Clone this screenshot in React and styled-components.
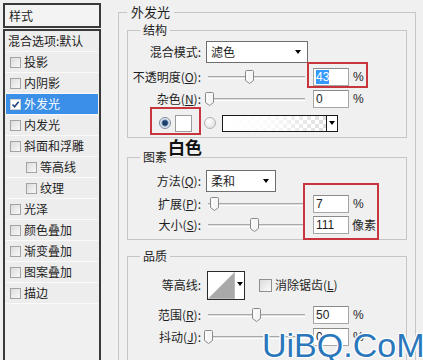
import React from "react";
import styled, { createGlobalStyle } from "styled-components";

const Global = createGlobalStyle`
  html, body { margin: 0; padding: 0; background: #f0f0f0; }
  body {
    font-family: "Noto Sans CJK SC", "Noto Sans", sans-serif;
    font-size: 12px;
    color: #1e1e1e;
  }
  * { box-sizing: border-box; }
`;

const Page = styled.div`
  position: relative;
  width: 423px;
  height: 360px;
  overflow: hidden;
  display: flex;
  align-items: flex-start;
  background: #f0f0f0;
`;

/* ---------- left style list ---------- */
const StylePanel = styled.div`
  width: 98px;
  height: 360px;
  margin: 3px 0 0 3px;
  display: flex;
  flex-direction: column;
`;

const PanelHeader = styled.div`
  height: 25px;
  border: 2px solid #3a3a3a;
  background: #f3f3f3;
  padding-left: 4px;
  display: flex;
  align-items: center;
  line-height: 1;
`;

const ListBox = styled.div`
  flex: 1;
  margin-top: 1px;
  border: 2px solid #3a3a3a;
  border-bottom: none;
  padding: 0 1px;
  background: #f0f0f0;
`;

const ListItem = styled.div`
  height: 21px;
  display: flex;
  align-items: center;
  gap: 3px;
  padding-left: ${(p) => p.$pl}px;
  background: ${(p) => (p.$active ? "#3b8fe6" : "#ededed")};
  color: ${(p) => (p.$active ? "#ffffff" : "#1e1e1e")};
  border-bottom: 1px solid #fafafa;
  line-height: 1;
  white-space: nowrap;
`;

const ListCheck = styled.span`
  width: 11px;
  height: 11px;
  flex-shrink: 0;
  border: 1px solid #a3a3a3;
  background: linear-gradient(135deg, #dcdcdc, #f8f8f8);
  display: flex;
  align-items: center;
  justify-content: center;
  ${(p) => p.$checked && "background: #ffffff; border-color: #d0d0d0;"}
`;

/* ---------- right options ---------- */
const Main = styled.div`
  margin-left: 17px;
  height: 360px;
`;

const Group = styled.fieldset`
  margin: ${(p) => p.$mt || 0}px 0 0 0;
  padding: ${(p) => p.$pad || "0"};
  width: ${(p) => (p.$w ? `${p.$w}px` : "auto")};
  height: ${(p) => (p.$h ? `${p.$h}px` : "auto")};
  border: 1px solid #c6c6c6;
  min-width: 0;
`;

const Legend = styled.legend`
  margin-left: ${(p) => p.$ml || 0}px;
  padding: 0 ${(p) => p.$px || 3}px;
  font-size: ${(p) => p.$fs || 12}px;
  line-height: ${(p) => p.$lh || 14}px;
`;

const Row = styled.div`
  display: flex;
  align-items: center;
  height: ${(p) => p.$h}px;
  margin-top: ${(p) => p.$mt || 0}px;
  padding-left: ${(p) => p.$pl || 0}px;
`;

const Label = styled.span`
  width: 73px;
  margin-right: 5px;
  flex-shrink: 0;
  text-align: right;
  white-space: nowrap;
  line-height: 1;
`;

const Dropdown = styled.div`
  width: ${(p) => p.$w}px;
  height: 22px;
  border: 1px solid #6e6e6e;
  background: #ffffff;
  display: flex;
  align-items: center;
  padding-left: 4px;
  line-height: 1;
`;

const Arrow = styled.span`
  margin-left: auto;
  margin-right: ${(p) => p.$mr ?? 5}px;
  width: 0;
  height: 0;
  border-left: 3.5px solid transparent;
  border-right: 3.5px solid transparent;
  border-top: 4px solid #000;
`;

const SliderWrap = styled.div`
  position: relative;
  width: 101px;
  height: 14px;
  flex-shrink: 0;
`;

const Track = styled.div`
  position: absolute;
  left: 2px;
  right: 2px;
  top: 6px;
  height: 3px;
  border-top: 1px solid #a9a9a9;
  border-bottom: 1px solid #ffffff;
  background: #dcdcdc;
`;

const Thumb = styled.svg`
  position: absolute;
  top: 0;
  left: ${(p) => 2 + p.$v * 97 - 4.5}px;
`;

const NumBox = styled.div`
  width: 36px;
  height: 18px;
  margin-left: 6px;
  flex-shrink: 0;
  border: 1px solid #a6a6a6;
  border-top-color: #8b8b8b;
  background: #ffffff;
  padding-left: 2px;
  display: flex;
  align-items: center;
  font-family: "Liberation Sans", Arial, sans-serif;
  font-size: 12px;
  line-height: 1;
`;

const Selected = styled.span`
  background: #3399ff;
  color: #ffffff;
  padding: 1px 0;
`;

const Unit = styled.span`
  margin-left: ${(p) => p.$ml ?? 4}px;
  font-family: ${(p) =>
    p.$cjk
      ? '"Noto Sans CJK SC", sans-serif'
      : '"Liberation Sans", Arial, sans-serif'};
  font-size: 12px;
  line-height: 1;
`;

const Radio = styled.span`
  width: 12px;
  height: 12px;
  border-radius: 50%;
  flex-shrink: 0;
  border: 1px solid ${(p) => (p.$on ? "#7a8a9c" : "#b4b4b4")};
  background: ${(p) =>
    p.$on
      ? "radial-gradient(circle, #1f3f66 0 2.2px, #5f86b3 3px, #dfe6ee 4px, #f2f2f2 6px)"
      : "radial-gradient(circle at 35% 35%, #ffffff, #dadada)"};
`;

const Swatch = styled.span`
  width: 17px;
  height: 17px;
  margin-left: ${(p) => p.$ml || 0}px;
  border: 1px solid #9c9c9c;
  background: #ffffff;
  flex-shrink: 0;
`;

const GradientBox = styled.div`
  margin-left: 6px;
  width: 116px;
  height: 17px;
  border: 1px solid #1a1a1a;
  display: flex;
  flex-shrink: 0;
`;

const GradientFill = styled.div`
  flex: 1;
  background:
    linear-gradient(to right, #ffffff 0%, rgba(255, 255, 255, 0.85) 45%, rgba(255, 255, 255, 0) 100%),
    repeating-conic-gradient(#dedede 0 25%, #ffffff 0 50%) 0 0 / 8px 8px;
`;

const GradientDrop = styled.div`
  width: 11px;
  border-left: 1px solid #1a1a1a;
  background: #ffffff;
  display: flex;
  align-items: center;
`;

const ContourBox = styled.div`
  width: 38px;
  height: 29px;
  margin-left: 1px;
  border: 1px solid #2a2a2a;
  display: flex;
  background: #ffffff;
  flex-shrink: 0;
`;

const ContourDrop = styled.div`
  width: 10px;
  border-left: 1px solid #bdbdbd;
  display: flex;
  align-items: flex-start;
  padding-top: 10px;
`;

const BoxCheck = styled.span`
  width: 13px;
  height: 13px;
  margin-left: 14px;
  border: 1px solid #8f8f8f;
  background: linear-gradient(135deg, #dcdcdc, #fbfbfb);
  flex-shrink: 0;
`;

const CheckText = styled.span`
  margin-left: 3px;
  line-height: 1;
  white-space: nowrap;
`;

/* ---------- overlays (annotations) ---------- */
const Mark = styled.div`
  position: absolute;
  left: ${(p) => p.$x}px;
  top: ${(p) => p.$y}px;
  width: ${(p) => p.$w}px;
  height: ${(p) => p.$h}px;
  border: 2px solid #c7363d;
  pointer-events: none;
`;

const Note = styled.div`
  position: absolute;
  left: 168px;
  top: 138px;
  font-size: 17px;
  font-weight: 700;
  line-height: 17px;
  color: #111;
`;

const Watermark = styled.div`
  position: absolute;
  left: 262px;
  top: 328px;
  font-family: "Liberation Sans", Arial, sans-serif;
  font-size: 34px;
  line-height: 1;
  color: #2a78bb;
  white-space: nowrap;
  text-shadow: 1px 0 0 #fff, -1px 0 0 #fff, 0 1px 0 #fff, 0 -1px 0 #fff,
    1px 1px 0 #fff, -1px -1px 0 #fff, 1px -1px 0 #fff, -1px 1px 0 #fff;
`;

/* ---------- little pieces ---------- */
const CheckMark = () => (
  <svg width="9" height="9" viewBox="0 0 9 9">
    <path d="M1.5 4.5 L3.6 6.8 L7.6 1.8" fill="none" stroke="#23427a" strokeWidth="1.6" />
  </svg>
);

const Slider = ({ v }) => (
  <SliderWrap>
    <Track />
    <Thumb $v={v} width="9" height="14" viewBox="0 0 9 14">
      <path
        d="M1.5 0.5 H7.5 Q8.5 0.5 8.5 1.5 V10.5 L4.5 13.5 L0.5 10.5 V1.5 Q0.5 0.5 1.5 0.5 Z"
        fill="#f6f6f6"
        stroke="#8a8a8a"
      />
      <path d="M2.5 2.5 V10" stroke="#ffffff" />
    </Thumb>
  </SliderWrap>
);

const Num = ({ children }) => <NumBox>{children}</NumBox>;

const styleItems = [
  { t: "投影" },
  { t: "内阴影" },
  { t: "外发光", active: true },
  { t: "内发光" },
  { t: "斜面和浮雕" },
  { t: "等高线", indent: true },
  { t: "纹理", indent: true },
  { t: "光泽" },
  { t: "颜色叠加" },
  { t: "渐变叠加" },
  { t: "图案叠加" },
  { t: "描边" },
];

export default function App() {
  return (
    <>
      <Global />
      <Page>
        <StylePanel>
          <PanelHeader>样式</PanelHeader>
          <ListBox>
            <ListItem $pl={2}>混合选项:默认</ListItem>
            {styleItems.map((it) => (
              <ListItem key={it.t} $pl={it.indent ? 20 : 4} $active={it.active}>
                <ListCheck $checked={it.active}>{it.active && <CheckMark />}</ListCheck>
                {it.t}
              </ListItem>
            ))}
          </ListBox>
        </StylePanel>

        <Main>
          <Group $mt={4} $w={298} $h={380} $pad="3px 8px 0 8px">
            <Legend $px={4} $fs={13} $lh={16}>外发光</Legend>

            <Group $pad="3px 0 3px 0">
              <Legend $ml={12}>结构</Legend>
              <Row $h={24}>
                <Label>混合模式:</Label>
                <Dropdown $w={102}>
                  滤色
                  <Arrow $mr={6} />
                </Dropdown>
              </Row>
              <Row $h={22} $mt={2}>
                <Label>
                  不透明度(<u>O</u>):
                </Label>
                <Slider v={0.43} />
                <Num>
                  <Selected>43</Selected>
                </Num>
                <Unit>%</Unit>
              </Row>
              <Row $h={21}>
                <Label>
                  杂色(<u>N</u>):
                </Label>
                <Slider v={0.02} />
                <Num>0</Num>
                <Unit>%</Unit>
              </Row>
              <Row $h={22} $mt={3} $pl={31}>
                <Radio $on />
                <Swatch $ml={4} />
                <Radio style={{ marginLeft: 12 }} />
                <GradientBox>
                  <GradientFill />
                  <GradientDrop>
                    <Arrow $mr={2} />
                  </GradientDrop>
                </GradientBox>
              </Row>
            </Group>

            <Group $mt={12} $pad="5px 0 3px 0">
              <Legend $ml={12}>图素</Legend>
              <Row $h={24}>
                <Label>
                  方法(<u>Q</u>):
                </Label>
                <Dropdown $w={70}>
                  柔和
                  <Arrow $mr={6} />
                </Dropdown>
              </Row>
              <Row $h={21}>
                <Label>
                  扩展(<u>P</u>):
                </Label>
                <Slider v={0.07} />
                <Num>7</Num>
                <Unit>%</Unit>
              </Row>
              <Row $h={22}>
                <Label>
                  大小(<u>S</u>):
                </Label>
                <Slider v={0.48} />
                <Num>111</Num>
                <Unit $cjk $ml={3}>像素</Unit>
              </Row>
            </Group>

            <Group $mt={9} $pad="5px 0 20px 0">
              <Legend $ml={12}>品质</Legend>
              <Row $h={34}>
                <Label>等高线:</Label>
                <ContourBox>
                  <svg width="27" height="27" viewBox="0 0 27 27">
                    <polygon points="0,27 27,0 27,27" fill="#a9a9a9" />
                  </svg>
                  <ContourDrop>
                    <Arrow $mr={1} />
                  </ContourDrop>
                </ContourBox>
                <BoxCheck />
                <CheckText>
                  消除锯齿(<u>L</u>)
                </CheckText>
              </Row>
              <Row $h={22} $mt={2}>
                <Label>
                  范围(<u>R</u>):
                </Label>
                <Slider v={0.5} />
                <Num>50</Num>
                <Unit>%</Unit>
              </Row>
              <Row $h={22}>
                <Label>
                  抖动(<u>J</u>):
                </Label>
                <Slider v={0} />
                <Num>0</Num>
                <Unit>%</Unit>
              </Row>
            </Group>
          </Group>
        </Main>

        <Mark $x={307} $y={62} $w={61} $h={26} />
        <Mark $x={150} $y={107} $w={51} $h={28} />
        <Mark $x={303} $y={183} $w={76} $h={57} />
        <Note>白色</Note>
        <Watermark>UiBQ.CoM</Watermark>
      </Page>
    </>
  );
}
